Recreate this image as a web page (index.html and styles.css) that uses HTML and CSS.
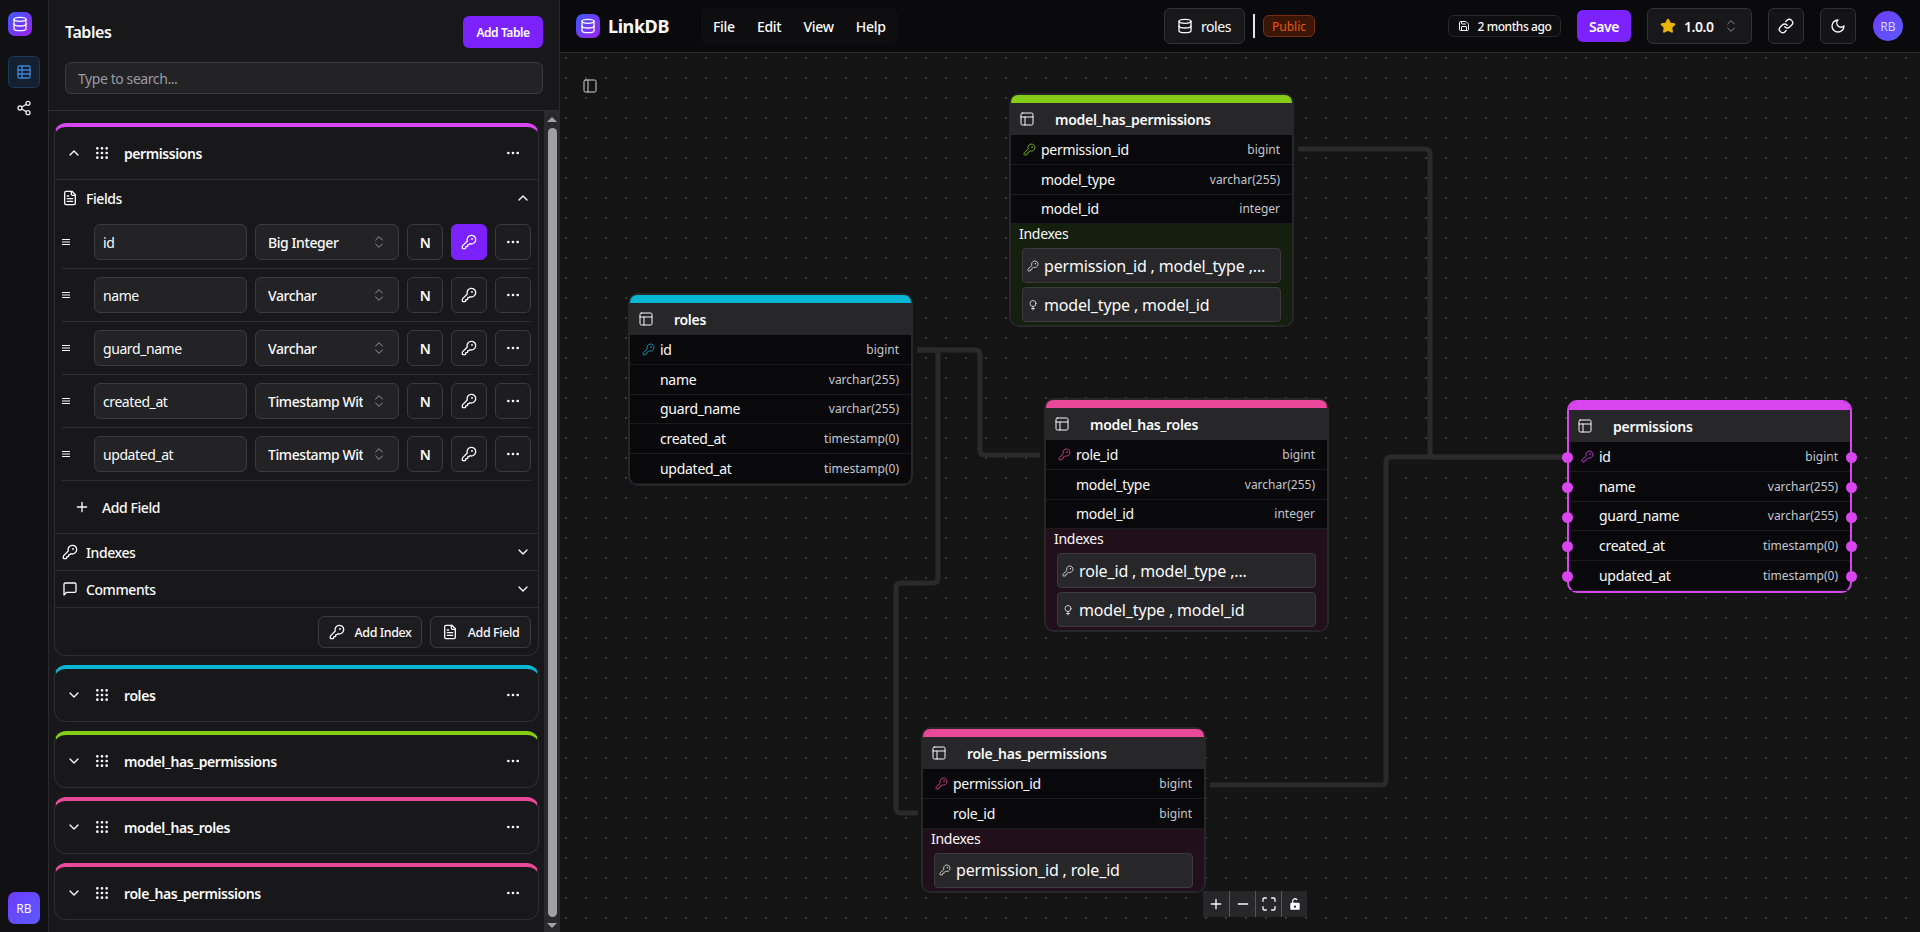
FILE: index.html
```html
<!DOCTYPE html>
<html lang="en">
<head>
  <meta charset="UTF-8">
  <title>LinkDB - roles</title>
  <link rel="stylesheet" href="styles.css">
</head>
<body>

  <!-- icon sheet -->
  <svg class="icon-sheet" xmlns="http://www.w3.org/2000/svg">
    <symbol id="i-db" viewBox="0 0 24 24"><ellipse cx="12" cy="5" rx="9" ry="3"/><path d="M3 5V19A9 3 0 0 0 21 19V5"/><path d="M3 12A9 3 0 0 0 21 12"/></symbol>
    <symbol id="i-grid" viewBox="0 0 24 24"><rect x="3" y="3" width="18" height="18" rx="2"/><path d="M3 9h18M3 15h18M9 3v18"/></symbol>
    <symbol id="i-node" viewBox="0 0 24 24"><rect x="3" y="3" width="18" height="18" rx="2"/><path d="M3 9h18M9 21V9"/></symbol>
    <symbol id="i-share" viewBox="0 0 24 24"><circle cx="18" cy="5" r="3"/><circle cx="6" cy="12" r="3"/><circle cx="18" cy="19" r="3"/><path d="M8.59 13.51l6.83 3.98M15.41 6.51l-6.82 3.98"/></symbol>
    <symbol id="i-key" viewBox="0 0 24 24"><path d="M2.586 17.414A2 2 0 0 0 2 18.828V21a1 1 0 0 0 1 1h3a1 1 0 0 0 1-1v-1a1 1 0 0 1 1-1h1a1 1 0 0 0 1-1v-1a1 1 0 0 1 1-1h.172a2 2 0 0 0 1.414-.586l.814-.814a6.5 6.5 0 1 0-4-4z"/><circle cx="16.5" cy="7.5" r=".5"/></symbol>
    <symbol id="i-grip" viewBox="0 0 24 24"><circle cx="5" cy="5" r="1"/><circle cx="12" cy="5" r="1"/><circle cx="19" cy="5" r="1"/><circle cx="5" cy="12" r="1"/><circle cx="12" cy="12" r="1"/><circle cx="19" cy="12" r="1"/><circle cx="5" cy="19" r="1"/><circle cx="12" cy="19" r="1"/><circle cx="19" cy="19" r="1"/></symbol>
    <symbol id="i-more" viewBox="0 0 24 24"><circle cx="5" cy="12" r="1"/><circle cx="12" cy="12" r="1"/><circle cx="19" cy="12" r="1"/></symbol>
    <symbol id="i-up" viewBox="0 0 24 24"><path d="M18 15l-6-6-6 6"/></symbol>
    <symbol id="i-down" viewBox="0 0 24 24"><path d="M6 9l6 6 6-6"/></symbol>
    <symbol id="i-updown" viewBox="0 0 24 24"><path d="M7 15l5 5 5-5M7 9l5-5 5 5"/></symbol>
    <symbol id="i-file" viewBox="0 0 24 24"><path d="M15 2H6a2 2 0 0 0-2 2v16a2 2 0 0 0 2 2h12a2 2 0 0 0 2-2V7Z"/><path d="M14 2v4a2 2 0 0 0 2 2h4M10 9H8M16 13H8M16 17H8"/></symbol>
    <symbol id="i-comment" viewBox="0 0 24 24"><path d="M21 15a2 2 0 0 1-2 2H7l-4 4V5a2 2 0 0 1 2-2h14a2 2 0 0 1 2 2z"/></symbol>
    <symbol id="i-plus" viewBox="0 0 24 24"><path d="M5 12h14M12 5v14"/></symbol>
    <symbol id="i-minus" viewBox="0 0 24 24"><path d="M5 12h14"/></symbol>
    <symbol id="i-lines" viewBox="0 0 8 8"><path d="M0 1.5h8M0 4h8M0 6.5h8"/></symbol>
    <symbol id="i-save" viewBox="0 0 24 24"><path d="M15.2 3a2 2 0 0 1 1.4.6l3.8 3.8a2 2 0 0 1 .6 1.4V19a2 2 0 0 1-2 2H5a2 2 0 0 1-2-2V5a2 2 0 0 1 2-2z"/><path d="M17 21v-7a1 1 0 0 0-1-1H8a1 1 0 0 0-1 1v7M7 3v4a1 1 0 0 0 1 1h7"/></symbol>
    <symbol id="i-link" viewBox="0 0 24 24"><path d="M10 13a5 5 0 0 0 7.54.54l3-3a5 5 0 0 0-7.07-7.07l-1.72 1.71"/><path d="M14 11a5 5 0 0 0-7.54-.54l-3 3a5 5 0 0 0 7.07 7.07l1.71-1.71"/></symbol>
    <symbol id="i-moon" viewBox="0 0 24 24"><path d="M12 3a6 6 0 0 0 9 9 9 9 0 1 1-9-9Z"/></symbol>
    <symbol id="i-star" viewBox="0 0 24 24"><path d="M11.525 2.295a.53.53 0 0 1 .95 0l2.31 4.679a2.123 2.123 0 0 0 1.595 1.16l5.166.756a.53.53 0 0 1 .294.904l-3.736 3.638a2.123 2.123 0 0 0-.611 1.878l.882 5.14a.53.53 0 0 1-.771.56l-4.618-2.428a2.122 2.122 0 0 0-1.973 0L6.396 21.01a.53.53 0 0 1-.77-.56l.881-5.139a2.122 2.122 0 0 0-.611-1.879L2.16 9.795a.53.53 0 0 1 .294-.906l5.165-.755a2.122 2.122 0 0 0 1.597-1.16z"/></symbol>
    <symbol id="i-panel" viewBox="0 0 24 24"><rect x="3" y="3" width="18" height="18" rx="2"/><path d="M9 3v18"/></symbol>
    <symbol id="i-unique" viewBox="0 0 24 24"><circle cx="12" cy="9" r="6"/><path d="M12 15v7M9 19h6"/></symbol>
    <symbol id="i-fit" viewBox="0 0 24 24"><path d="M3 8V5a2 2 0 0 1 2-2h3M16 3h3a2 2 0 0 1 2 2v3M21 16v3a2 2 0 0 1-2 2h-3M8 21H5a2 2 0 0 1-2-2v-3"/></symbol>
  </svg>

  <div class="app">

    <nav class="rail">
      <div class="logo"><svg class="icon"><use href="#i-db"/></svg></div>
      <div class="rail-btn active"><svg class="icon"><use href="#i-grid"/></svg></div>
      <div class="rail-btn"><svg class="icon"><use href="#i-share"/></svg></div>
      <div class="rail-user">RB</div>
    </nav>

    <aside class="sidebar">
      <div class="side-head">
        <div class="side-title-row">
          <h2 class="side-title">Tables</h2>
          <button class="btn-primary add-table">Add Table</button>
        </div>
        <input class="search" type="text" placeholder="Type to search...">
      </div>

      <div class="side-scroll">
        <div class="table-list">

          <section class="card c-magenta">
            <div class="card-head open">
              <svg class="icon"><use href="#i-up"/></svg>
              <svg class="icon grip"><use href="#i-grip"/></svg>
              <span class="card-name">permissions</span>
              <svg class="icon"><use href="#i-more"/></svg>
            </div>

            <div class="section-head">
              <svg class="icon"><use href="#i-file"/></svg>
              <span>Fields</span>
              <svg class="icon chev"><use href="#i-up"/></svg>
            </div>

            <div class="field">
              <svg class="icon handle"><use href="#i-lines"/></svg>
              <input class="field-name" type="text" value="id">
              <div class="field-type"><span>Big Integer</span><svg class="icon"><use href="#i-updown"/></svg></div>
              <div class="square">N</div>
              <div class="square on"><svg class="icon"><use href="#i-key"/></svg></div>
              <div class="square"><svg class="icon"><use href="#i-more"/></svg></div>
            </div>
            <div class="field">
              <svg class="icon handle"><use href="#i-lines"/></svg>
              <input class="field-name" type="text" value="name">
              <div class="field-type"><span>Varchar</span><svg class="icon"><use href="#i-updown"/></svg></div>
              <div class="square">N</div>
              <div class="square"><svg class="icon"><use href="#i-key"/></svg></div>
              <div class="square"><svg class="icon"><use href="#i-more"/></svg></div>
            </div>
            <div class="field">
              <svg class="icon handle"><use href="#i-lines"/></svg>
              <input class="field-name" type="text" value="guard_name">
              <div class="field-type"><span>Varchar</span><svg class="icon"><use href="#i-updown"/></svg></div>
              <div class="square">N</div>
              <div class="square"><svg class="icon"><use href="#i-key"/></svg></div>
              <div class="square"><svg class="icon"><use href="#i-more"/></svg></div>
            </div>
            <div class="field">
              <svg class="icon handle"><use href="#i-lines"/></svg>
              <input class="field-name" type="text" value="created_at">
              <div class="field-type"><span>Timestamp With Time Zone</span><svg class="icon"><use href="#i-updown"/></svg></div>
              <div class="square">N</div>
              <div class="square"><svg class="icon"><use href="#i-key"/></svg></div>
              <div class="square"><svg class="icon"><use href="#i-more"/></svg></div>
            </div>
            <div class="field">
              <svg class="icon handle"><use href="#i-lines"/></svg>
              <input class="field-name" type="text" value="updated_at">
              <div class="field-type"><span>Timestamp With Time Zone</span><svg class="icon"><use href="#i-updown"/></svg></div>
              <div class="square">N</div>
              <div class="square"><svg class="icon"><use href="#i-key"/></svg></div>
              <div class="square"><svg class="icon"><use href="#i-more"/></svg></div>
            </div>

            <div class="add-field">
              <svg class="icon"><use href="#i-plus"/></svg>
              <span>Add Field</span>
            </div>

            <div class="section-head closed">
              <svg class="icon"><use href="#i-key"/></svg>
              <span>Indexes</span>
              <svg class="icon chev"><use href="#i-down"/></svg>
            </div>
            <div class="section-head closed">
              <svg class="icon"><use href="#i-comment"/></svg>
              <span>Comments</span>
              <svg class="icon chev"><use href="#i-down"/></svg>
            </div>

            <div class="card-foot">
              <button class="btn-outline btn-index"><svg class="icon"><use href="#i-key"/></svg>Add Index</button>
              <button class="btn-outline btn-field"><svg class="icon"><use href="#i-file"/></svg>Add Field</button>
            </div>
          </section>

          <section class="card c-cyan">
            <div class="card-head">
              <svg class="icon"><use href="#i-down"/></svg>
              <svg class="icon grip"><use href="#i-grip"/></svg>
              <span class="card-name">roles</span>
              <svg class="icon"><use href="#i-more"/></svg>
            </div>
          </section>
          <section class="card c-lime">
            <div class="card-head">
              <svg class="icon"><use href="#i-down"/></svg>
              <svg class="icon grip"><use href="#i-grip"/></svg>
              <span class="card-name">model_has_permissions</span>
              <svg class="icon"><use href="#i-more"/></svg>
            </div>
          </section>
          <section class="card c-pink">
            <div class="card-head">
              <svg class="icon"><use href="#i-down"/></svg>
              <svg class="icon grip"><use href="#i-grip"/></svg>
              <span class="card-name">model_has_roles</span>
              <svg class="icon"><use href="#i-more"/></svg>
            </div>
          </section>
          <section class="card c-pink">
            <div class="card-head">
              <svg class="icon"><use href="#i-down"/></svg>
              <svg class="icon grip"><use href="#i-grip"/></svg>
              <span class="card-name">role_has_permissions</span>
              <svg class="icon"><use href="#i-more"/></svg>
            </div>
          </section>

        </div>

        <div class="scrollbar">
          <span class="arrow-up"></span>
          <span class="thumb"></span>
          <span class="arrow-down"></span>
        </div>
      </div>
    </aside>

    <main class="main">
      <header class="topbar">
        <div class="top-left">
          <div class="logo"><svg class="icon"><use href="#i-db"/></svg></div>
          <span class="brand">LinkDB</span>
          <div class="menu">
            <span>File</span>
            <span>Edit</span>
            <span>View</span>
            <span>Help</span>
          </div>
        </div>
        <div class="top-center">
          <div class="db-name"><svg class="icon"><use href="#i-db"/></svg>roles</div>
          <span class="top-divider"></span>
          <span class="badge">Public</span>
        </div>
        <div class="top-right">
          <div class="saved"><svg class="icon"><use href="#i-save"/></svg>2 months ago</div>
          <button class="btn-primary save">Save</button>
          <div class="version"><svg class="icon star"><use href="#i-star"/></svg><span>1.0.0</span><svg class="icon updown"><use href="#i-updown"/></svg></div>
          <div class="top-icon"><svg class="icon"><use href="#i-link"/></svg></div>
          <div class="top-icon"><svg class="icon"><use href="#i-moon"/></svg></div>
          <div class="avatar">RB</div>
        </div>
      </header>

      <div class="canvas">
        <svg class="edges" xmlns="http://www.w3.org/2000/svg">
          <path d="M738 96H865Q870 96 870 101V399Q870 404 875 404H1005"/>
          <path d="M650 732H821Q826 732 826 727V409Q826 404 831 404H1005"/>
          <path d="M357 297H415Q420 297 420 302V397Q420 402 425 402H480"/>
          <path d="M357 297H373Q378 297 378 302V525Q378 530 373 530H341Q336 530 336 535V755Q336 760 341 760H358"/>
        </svg>

        <svg class="icon panel-toggle"><use href="#i-panel"/></svg>

        <div class="node node-mhp c-lime">
          <div class="node-bar"></div>
          <div class="node-head"><svg class="icon"><use href="#i-node"/></svg><span>model_has_permissions</span></div>
          <div class="node-row"><svg class="icon key"><use href="#i-key"/></svg><span class="col-name">permission_id</span><span class="col-type">bigint</span></div>
          <div class="node-row"><span class="col-name">model_type</span><span class="col-type">varchar(255)</span></div>
          <div class="node-row"><span class="col-name">model_id</span><span class="col-type">integer</span></div>
          <div class="node-indexes">
            <div class="idx-title">Indexes</div>
            <div class="idx"><svg class="icon"><use href="#i-key"/></svg>permission_id , model_type ,...</div>
            <div class="idx"><svg class="icon"><use href="#i-unique"/></svg>model_type , model_id</div>
          </div>
        </div>

        <div class="node node-roles c-cyan">
          <div class="node-bar"></div>
          <div class="node-head"><svg class="icon"><use href="#i-node"/></svg><span>roles</span></div>
          <div class="node-row"><svg class="icon key"><use href="#i-key"/></svg><span class="col-name">id</span><span class="col-type">bigint</span></div>
          <div class="node-row"><span class="col-name">name</span><span class="col-type">varchar(255)</span></div>
          <div class="node-row"><span class="col-name">guard_name</span><span class="col-type">varchar(255)</span></div>
          <div class="node-row"><span class="col-name">created_at</span><span class="col-type">timestamp(0)</span></div>
          <div class="node-row"><span class="col-name">updated_at</span><span class="col-type">timestamp(0)</span></div>
        </div>

        <div class="node node-mhr c-pink">
          <div class="node-bar"></div>
          <div class="node-head"><svg class="icon"><use href="#i-node"/></svg><span>model_has_roles</span></div>
          <div class="node-row"><svg class="icon key"><use href="#i-key"/></svg><span class="col-name">role_id</span><span class="col-type">bigint</span></div>
          <div class="node-row"><span class="col-name">model_type</span><span class="col-type">varchar(255)</span></div>
          <div class="node-row"><span class="col-name">model_id</span><span class="col-type">integer</span></div>
          <div class="node-indexes">
            <div class="idx-title">Indexes</div>
            <div class="idx"><svg class="icon"><use href="#i-key"/></svg>role_id , model_type ,...</div>
            <div class="idx"><svg class="icon"><use href="#i-unique"/></svg>model_type , model_id</div>
          </div>
        </div>

        <div class="node node-rhp c-pink">
          <div class="node-bar"></div>
          <div class="node-head"><svg class="icon"><use href="#i-node"/></svg><span>role_has_permissions</span></div>
          <div class="node-row"><svg class="icon key"><use href="#i-key"/></svg><span class="col-name">permission_id</span><span class="col-type">bigint</span></div>
          <div class="node-row"><span class="col-name">role_id</span><span class="col-type">bigint</span></div>
          <div class="node-indexes">
            <div class="idx-title">Indexes</div>
            <div class="idx"><svg class="icon"><use href="#i-key"/></svg>permission_id , role_id</div>
          </div>
        </div>

        <div class="node node-perm selected c-magenta">
          <div class="node-bar"></div>
          <div class="node-head"><svg class="icon"><use href="#i-node"/></svg><span>permissions</span></div>
          <div class="node-row"><i class="dot left"></i><svg class="icon key"><use href="#i-key"/></svg><span class="col-name">id</span><span class="col-type">bigint</span><i class="dot right"></i></div>
          <div class="node-row"><i class="dot left"></i><span class="col-name">name</span><span class="col-type">varchar(255)</span><i class="dot right"></i></div>
          <div class="node-row"><i class="dot left"></i><span class="col-name">guard_name</span><span class="col-type">varchar(255)</span><i class="dot right"></i></div>
          <div class="node-row"><i class="dot left"></i><span class="col-name">created_at</span><span class="col-type">timestamp(0)</span><i class="dot right"></i></div>
          <div class="node-row"><i class="dot left"></i><span class="col-name">updated_at</span><span class="col-type">timestamp(0)</span><i class="dot right"></i></div>
        </div>

        <div class="controls">
          <button><svg class="icon"><use href="#i-plus"/></svg></button>
          <button><svg class="icon"><use href="#i-minus"/></svg></button>
          <button><svg class="icon"><use href="#i-fit"/></svg></button>
          <button>
            <svg class="lock" viewBox="0 0 24 24"><path d="M7 10V7a5 5 0 0 1 9.5-2.2l-1.9.9A3 3 0 0 0 9 7v3h9a2 2 0 0 1 2 2v8a2 2 0 0 1-2 2H6a2 2 0 0 1-2-2v-8a2 2 0 0 1 2-2zm5 4.5a2 2 0 1 0 0 4 2 2 0 0 0 0-4z"/></svg>
          </button>
        </div>
      </div>
    </main>

  </div>

</body>
</html>
```

FILE: styles.css
```css
* {
  box-sizing: border-box;
}

html, body {
  height: 100%;
}

body {
  margin: 0;
  background-color: #141414;
  color: #fafafa;
  font-family: "Noto Sans", sans-serif;
  font-size: 14px;
  letter-spacing: -0.03em;
  overflow: hidden;
}

button, input {
  font-family: inherit;
  letter-spacing: inherit;
  color: inherit;
}

.icon-sheet {
  display: none;
}

.icon {
  width: 16px;
  height: 16px;
  flex: none;
  fill: none;
  stroke: currentColor;
  stroke-width: 2;
  stroke-linecap: round;
  stroke-linejoin: round;
}

.app {
  display: flex;
  height: 932px;
}

/* left rail */
.rail {
  width: 49px;
  flex: none;
  display: flex;
  flex-direction: column;
  align-items: center;
  background-color: #111113;
  border-right: 1px solid #2b2b2f;
  padding-top: 12px;
  padding-bottom: 8px;
}

.logo {
  width: 24px;
  height: 24px;
  flex: none;
  display: flex;
  align-items: center;
  justify-content: center;
  border-radius: 7px;
  background: linear-gradient(135deg, #3b5bff, #a020f0);
}

.rail .logo {
  margin-right: 8px;
}

.rail-btn {
  width: 32px;
  height: 32px;
  display: flex;
  align-items: center;
  justify-content: center;
  border-radius: 6px;
  border: 1px solid transparent;
  color: #e4e4e7;
}

.rail-btn.active {
  margin-top: 20px;
  margin-bottom: 4px;
  color: #3b82d6;
  background-color: #14202f;
  border-color: #1c3a5c;
}

.rail-user {
  margin-top: auto;
  width: 32px;
  height: 32px;
  display: flex;
  align-items: center;
  justify-content: center;
  border-radius: 7px;
  font-size: 12px;
  letter-spacing: 0;
  background: linear-gradient(135deg, #6d3bff, #5b5bff);
}

/* sidebar */
.sidebar {
  width: 511px;
  flex: none;
  display: flex;
  flex-direction: column;
  background-color: #18181b;
  border-right: 1px solid #2b2b2f;
}

.side-head {
  flex: none;
  padding: 16px 16px 0 16px;
  height: 111px;
  border-bottom: 1px solid #2e2e32;
}

.side-title-row {
  display: flex;
  align-items: center;
  justify-content: space-between;
  height: 32px;
}

.side-title {
  margin: 0;
  font-size: 16px;
  font-weight: 600;
}

.btn-primary {
  border: none;
  border-radius: 6px;
  background-color: #7c22ff;
  color: #fff;
  font-weight: 600;
}

.add-table {
  width: 80px;
  height: 32px;
  padding: 0;
  font-size: 12px;
}

.search {
  display: block;
  width: 100%;
  height: 32px;
  margin-top: 14px;
  padding: 0 12px;
  border: 1px solid #3a3a40;
  border-radius: 6px;
  background-color: #232326;
  font-size: 14px;
}

.search::placeholder {
  color: #9a9aa2;
}

.side-scroll {
  flex: 1;
  min-height: 0;
  display: flex;
}

.table-list {
  flex: 1;
  padding: 12px 5px 0 5px;
  display: flex;
  flex-direction: column;
  gap: 9px;
}

.scrollbar {
  width: 16px;
  flex: none;
  display: flex;
  flex-direction: column;
  align-items: center;
  background-color: #2a2a2c;
  padding: 6px 0 4px 0;
}

.arrow-up, .arrow-down {
  width: 0;
  height: 0;
  border-left: 5px solid transparent;
  border-right: 5px solid transparent;
}

.arrow-up {
  border-bottom: 5px solid #a3a3a3;
}

.arrow-down {
  border-top: 5px solid #a3a3a3;
}

.thumb {
  flex: 1;
  width: 9px;
  margin: 6px 0;
  border-radius: 5px;
  background-color: #a0a0a0;
}

/* sidebar cards */
.card {
  border: 1px solid #2e2e32;
  border-top: 4px solid #888;
  border-radius: 12px;
}

.c-magenta { --tone: #d946ef; --tint: #1f0f24; }
.c-cyan { --tone: #06b6d4; --tint: #0c1f24; }
.c-lime { --tone: #84cc16; --tint: #141f0e; }
.c-pink { --tone: #ec4899; --tint: #220f1c; }

.card.c-magenta, .card.c-cyan, .card.c-lime, .card.c-pink {
  border-top-color: var(--tone);
}

.card-head {
  height: 52px;
  display: flex;
  align-items: center;
  padding: 0 17px 0 11px;
}

.card-head.open {
  border-bottom: 1px solid #2e2e32;
  height: 53px;
}

.card-head .grip {
  margin-left: 12px;
}

.card-name {
  flex: 1;
  margin-left: 14px;
  font-weight: 600;
}

.section-head {
  height: 36px;
  display: flex;
  align-items: center;
  padding: 0 7px;
  gap: 8px;
  font-weight: 500;
}

.section-head span {
  flex: 1;
}

.section-head.closed {
  height: 37px;
  border-bottom: 1px solid #2e2e32;
}

.field {
  display: grid;
  grid-template-columns: 153px 144px 36px 36px 36px;
  column-gap: 8px;
  align-items: center;
  height: 53px;
  margin: 0 7px;
  padding-left: 32px;
  border-bottom: 1px solid #2e2e32;
  position: relative;
}

.handle {
  position: absolute;
  left: 0;
  top: 22px;
  width: 8px;
  height: 8px;
  stroke-width: 1;
  stroke-linecap: butt;
}

.field-name, .field-type, .square {
  height: 36px;
  border: 1px solid #3a3a40;
  border-radius: 6px;
  background-color: #232326;
}

.field-name {
  width: 153px;
  padding: 0 8px;
  font-size: 14px;
}

.field-type {
  display: flex;
  align-items: center;
  gap: 8px;
  padding: 0 11px 0 12px;
  font-weight: 500;
}

.field-type span {
  flex: 1;
  white-space: nowrap;
  overflow: hidden;
}

.field-type .icon {
  color: #9a9aa2;
  stroke-width: 1.5;
}

.square {
  display: flex;
  align-items: center;
  justify-content: center;
  font-weight: 600;
  background-color: #1d1d20;
}

.square.on {
  background-color: #7c22ff;
  border-color: #7c22ff;
}

.add-field {
  height: 53px;
  display: flex;
  align-items: center;
  gap: 12px;
  padding-left: 19px;
  font-weight: 500;
  border-bottom: 1px solid #2e2e32;
}

.card-foot {
  display: flex;
  justify-content: flex-end;
  gap: 8px;
  padding: 8px 7px 7px 7px;
}

.btn-outline {
  height: 32px;
  display: flex;
  align-items: center;
  justify-content: center;
  gap: 10px;
  padding: 0;
  border: 1px solid #3a3a40;
  border-radius: 6px;
  background-color: #1d1d20;
  font-size: 12.5px;
  font-weight: 500;
}

.btn-index { width: 104px; }
.btn-field { width: 101px; }

/* top bar */
.main {
  flex: 1;
  min-width: 0;
  display: flex;
  flex-direction: column;
}

.topbar {
  height: 53px;
  flex: none;
  display: grid;
  grid-template-columns: 1fr auto 1fr;
  align-items: center;
  padding: 0 17px 0 16px;
  background-color: #0a0a0c;
  border-bottom: 1px solid #2b2b2f;
}

.top-left, .top-center, .top-right {
  display: flex;
  align-items: center;
}

.brand {
  margin-left: 8px;
  width: 70px;
  font-size: 18px;
  font-weight: 700;
}

.menu {
  display: flex;
  height: 36px;
  width: 196px;
  align-items: center;
  margin-left: 23px;
  padding: 0 12px;
  gap: 22px;
  border-radius: 6px;
  background-color: #0e0e10;
  font-weight: 500;
  letter-spacing: -0.02em;
}

.db-name {
  display: flex;
  align-items: center;
  gap: 8px;
  width: 81px;
  height: 36px;
  padding: 0 0 0 12px;
  border: 1px solid #323236;
  border-radius: 6px;
  background-color: #18181b;
}

.top-divider {
  width: 2px;
  height: 24px;
  margin: 0 8px;
  background-color: #e4e4e7;
}

.badge {
  display: flex;
  align-items: center;
  height: 22px;
  padding: 0 8px;
  border: 1px solid #7c2d12;
  border-radius: 6px;
  background-color: #3a1606;
  color: #ea580c;
  font-size: 12px;
  letter-spacing: 0;
}

.top-right {
  justify-content: flex-end;
}

.saved {
  display: flex;
  align-items: center;
  justify-content: center;
  gap: 8px;
  width: 113px;
  height: 22px;
  border: 1px solid #27272a;
  border-radius: 6px;
  background-color: #0e0e10;
  font-size: 12px;
  font-weight: 500;
}

.saved .icon {
  width: 12px;
  height: 12px;
}

.save {
  width: 54px;
  height: 32px;
  margin-left: 16px;
  padding: 0;
  font-size: 14px;
}

.version {
  display: flex;
  align-items: center;
  width: 105px;
  height: 36px;
  margin-left: 16px;
  padding: 0 12px;
  border: 1px solid #323236;
  border-radius: 6px;
  background-color: #18181b;
  font-weight: 600;
}

.version span {
  flex: 1;
  margin-left: 8px;
}

.star {
  color: #eab308;
  fill: #eab308;
}

.updown {
  color: #8a8a92;
  stroke-width: 1.5;
}

.top-icon {
  width: 36px;
  height: 36px;
  margin-left: 16px;
  display: flex;
  align-items: center;
  justify-content: center;
  border: 1px solid #323236;
  border-radius: 6px;
  background-color: #141416;
}

.avatar {
  width: 30px;
  height: 30px;
  margin-left: 17px;
  display: flex;
  align-items: center;
  justify-content: center;
  border-radius: 50%;
  font-size: 12px;
  letter-spacing: 0;
  color: #d8d8ff;
  background: linear-gradient(135deg, #6d3bff, #5b5bff);
}

/* canvas */
.canvas {
  flex: 1;
  position: relative;
  overflow: hidden;
  background-color: #141414;
  background-image: radial-gradient(circle, #3c3c3c 0.7px, transparent 0.9px);
  background-size: 20px 20px;
  background-position: -4px -5px;
}

.edges {
  position: absolute;
  left: 0;
  top: 0;
  width: 100%;
  height: 100%;
  fill: none;
  stroke: #2a2a2a;
  stroke-width: 5;
  stroke-linejoin: round;
}

.panel-toggle {
  position: absolute;
  left: 22px;
  top: 25px;
  color: #d4d4d8;
  stroke-width: 1.5;
}

.node {
  position: absolute;
  width: 285px;
  border: 2px solid #27272a;
  border-radius: 10px;
  background-color: #09090b;
  letter-spacing: -0.02em;
}

.node-roles { left: 68px; top: 240px; }
.node-mhp { left: 449px; top: 40px; }
.node-mhr { left: 484px; top: 345px; }
.node-rhp { left: 361px; top: 674px; }
.node-perm { left: 1007px; top: 347px; }

.node.selected {
  border-color: #d946ef;
}

.node-bar {
  height: 8px;
  border-radius: 7px 7px 0 0;
  background-color: var(--tone);
}

.node-head {
  display: flex;
  align-items: center;
  height: 32px;
  padding-left: 8px;
  gap: 20px;
  background-color: #27272a;
  font-weight: 600;
  font-size: 14px;
}

.node-head .icon {
  stroke-width: 1.5;
}

.node-row {
  position: relative;
  display: flex;
  align-items: center;
  height: 29.8px;
  padding: 0 12px 0 30px;
  border-bottom: 1px solid #1c1c1f;
}

.col-name {
  flex: 1;
}

.col-type {
  font-size: 12px;
  letter-spacing: 0;
  color: #c4c6cf;
}

.node-row .key {
  position: absolute;
  left: 12px;
  top: 8px;
  width: 13px;
  height: 13px;
  color: var(--tone);
  stroke-width: 1.5;
}

.dot {
  position: absolute;
  top: 10px;
  width: 11px;
  height: 11px;
  border-radius: 50%;
  background-color: #d946ef;
}

.dot.left { left: -7px; }
.dot.right { right: -7px; }

.node-indexes {
  padding: 0 11px 3px 11px;
  background-color: var(--tint);
  border-radius: 0 0 8px 8px;
}

.idx-title {
  height: 24px;
  line-height: 20px;
  margin-left: -3px;
}

.idx {
  display: flex;
  align-items: center;
  gap: 5px;
  height: 35px;
  padding-left: 4px;
  border: 1px solid #3a3a40;
  border-radius: 4px;
  background-color: #27272a;
  font-size: 16px;
  letter-spacing: -0.01em;
  white-space: nowrap;
}

.idx + .idx {
  margin-top: 4px;
}

.idx .icon {
  width: 12px;
  height: 12px;
  stroke-width: 1.5;
}

.controls {
  position: absolute;
  left: 643px;
  top: 838px;
  display: flex;
}

.controls button {
  width: 26px;
  height: 26px;
  padding: 0;
  display: flex;
  align-items: center;
  justify-content: center;
  border: none;
  border-left: 1px solid #55555a;
  background-color: #27272a;
}

.controls button:first-child {
  border-left: none;
}

.lock {
  width: 14px;
  height: 14px;
  fill: #fff;
}
```
